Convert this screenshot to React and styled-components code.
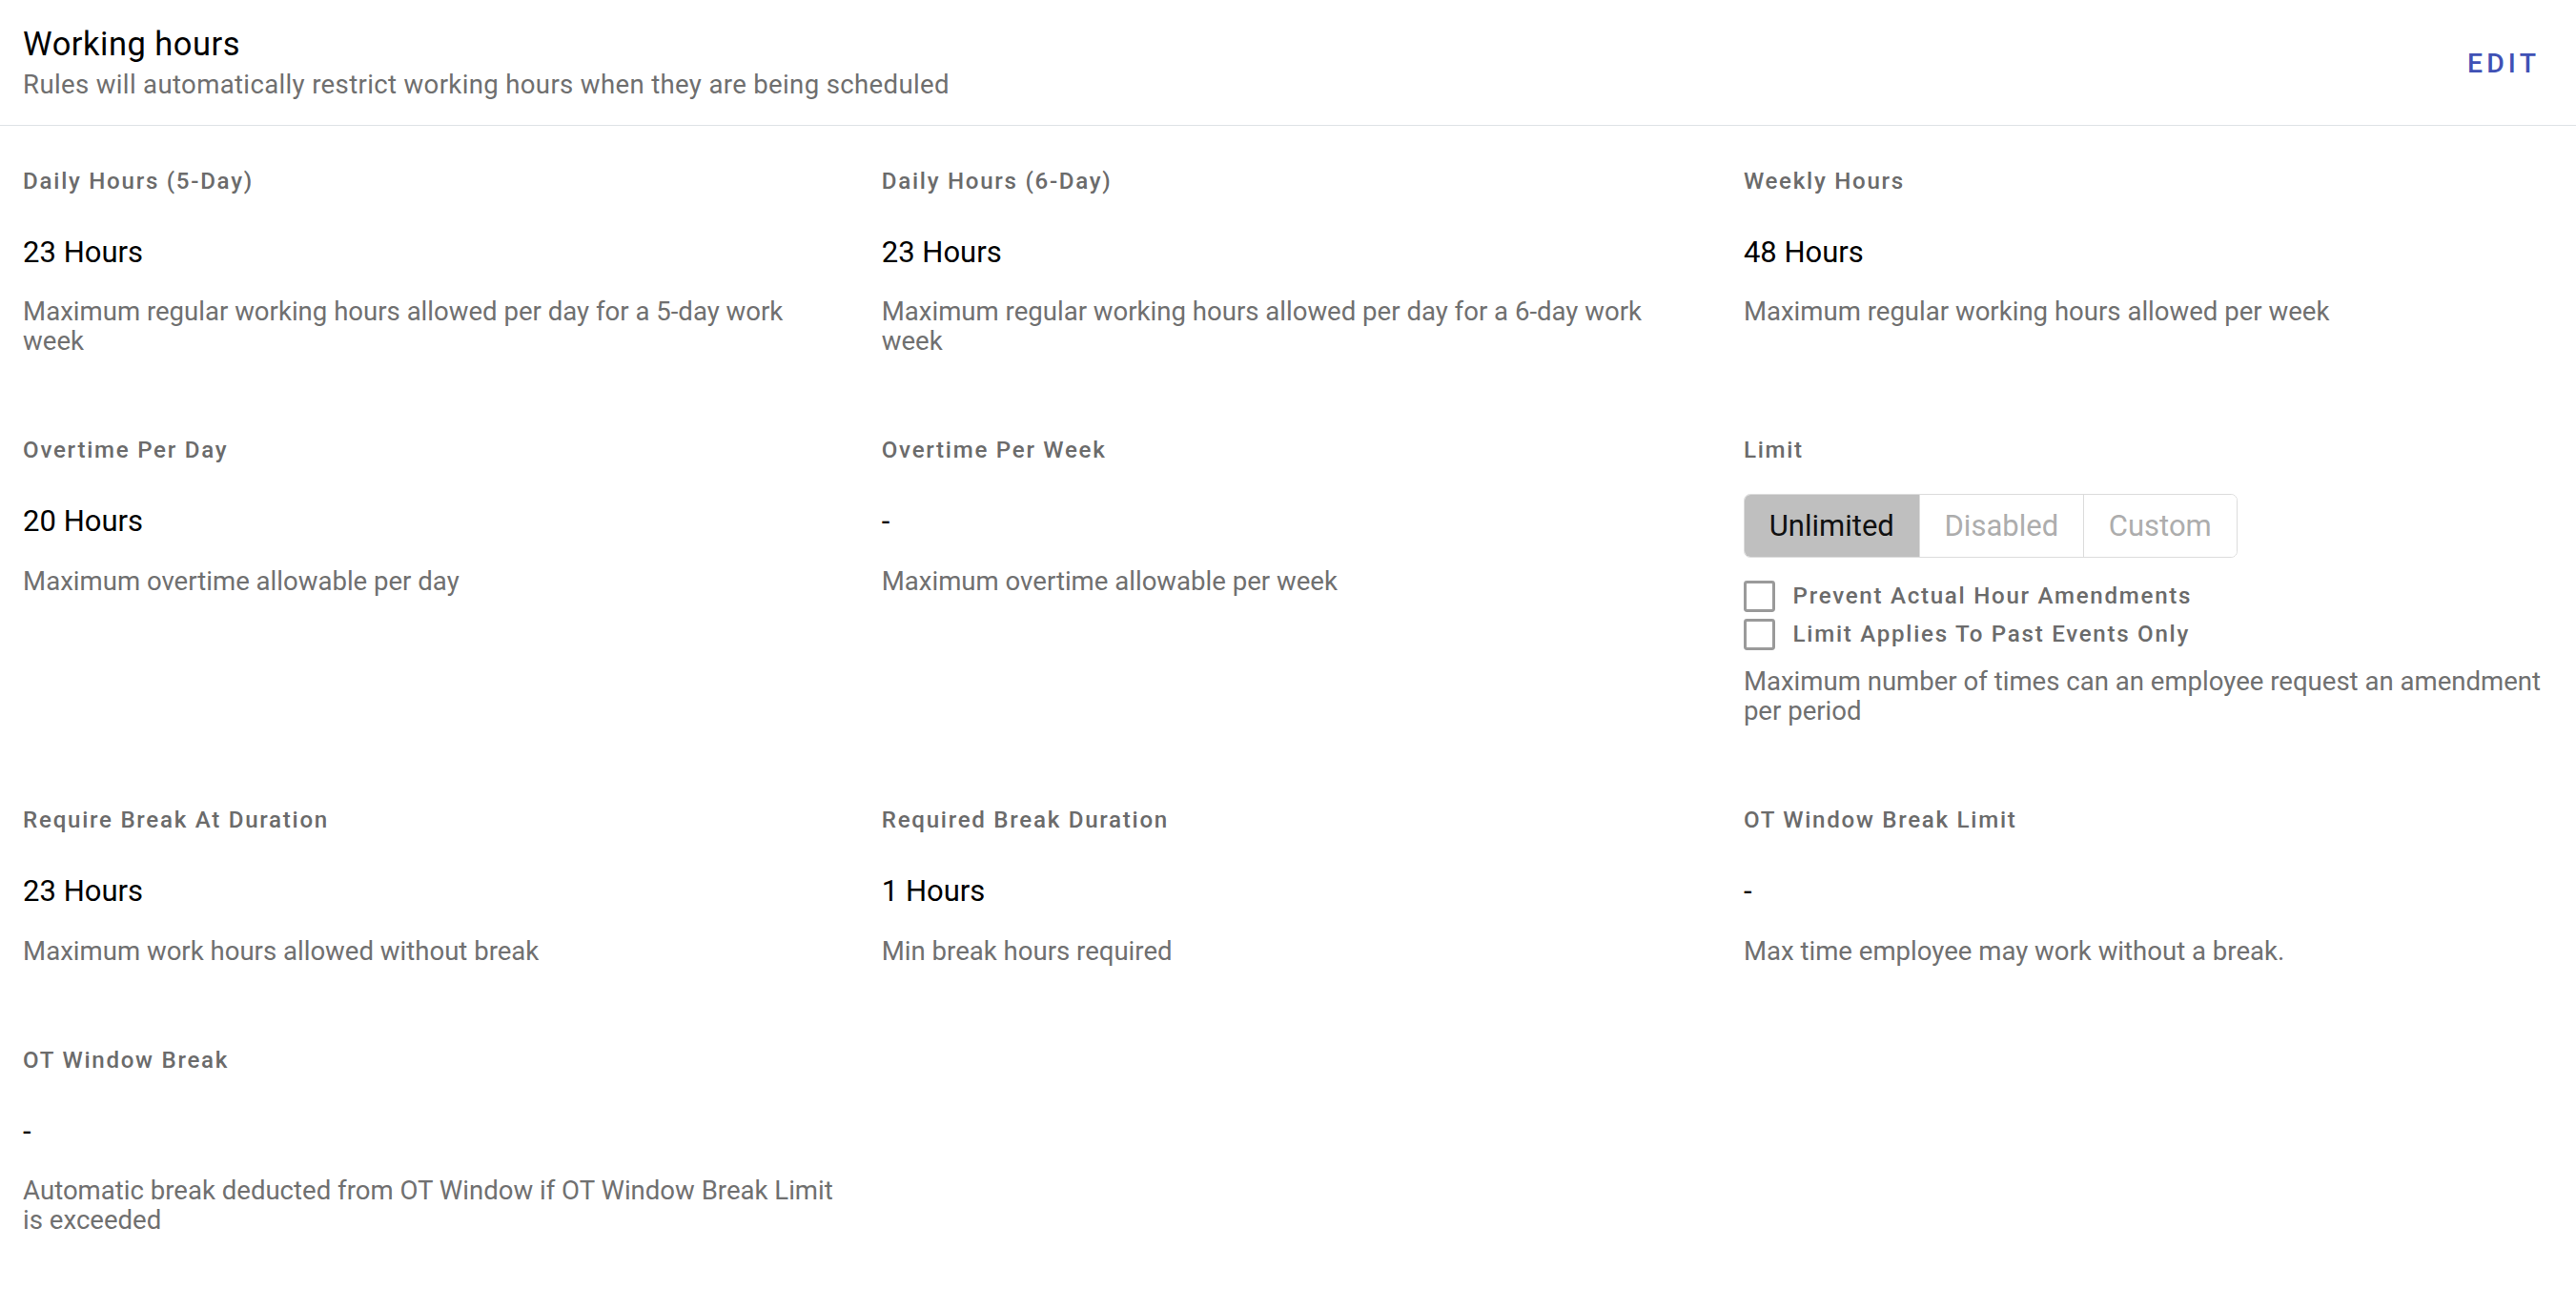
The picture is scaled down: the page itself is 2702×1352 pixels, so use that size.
import React, {useState} from 'react';
import styled, {createGlobalStyle} from "styled-components";

const GlobalStyle = createGlobalStyle`
  html {
    zoom: 1.7232;
  }

  body {
    margin: 0;
    background: #fff;
    font-family: Roboto, "Liberation Sans", Arial, sans-serif;
    color: #000;
  }
`

const Page = styled.div`
  width: 100%;
`

const Header = styled.div`
  display: flex;
  align-items: center;
  justify-content: space-between;
  padding: 15px 22px 14px 14px;
  border-bottom: 1px solid #dfe3e6;
`

const Title = styled.h1`
  margin: 0;
  font-size: 20px;
  line-height: 24px;
  font-weight: 400;
  letter-spacing: 0.3px;
  color: #000;
`

const Subtitle = styled.p`
  margin: 3px 0 0;
  font-size: 16px;
  line-height: 20px;
  letter-spacing: 0.2px;
  color: #6f6f6f;
`

const EditButton = styled.button`
  border: 0;
  background: none;
  padding: 0;
  cursor: pointer;
  font-family: inherit;
  font-size: 16.5px;
  font-weight: 500;
  letter-spacing: 2.4px;
  color: #3f51b5;
`

const Grid = styled.div`
  display: grid;
  grid-template-columns: repeat(3, 1fr);
  row-gap: 50px;
  padding: 26px 0 40px;
`

const Cell = styled.div`
  padding: 0 14px;
  min-width: 0;
  &:nth-child(3n) {
    padding-left: 16px;
  }
`

const Label = styled.div`
  font-size: 14px;
  line-height: 16px;
  font-weight: 500;
  letter-spacing: 1px;
  color: #6b6b6b;
  margin-bottom: ${p => p.$tight ? 18 : 24}px;
`

const Value = styled.div`
  font-size: 18px;
  line-height: 22px;
  color: #000;
  margin-bottom: 16px;
`

const Description = styled.p`
  margin: 0;
  font-size: 16px;
  line-height: 18px;
  color: #707070;
`

const Toggle = styled.div`
  display: inline-flex;
  height: 38px;
  border: 1px solid #dcdcdc;
  border-radius: 4px;
  overflow: hidden;
`

const ToggleButton = styled.button`
  border: 0;
  border-left: ${p => p.$first ? 0 : '1px solid #dcdcdc'};
  background: ${p => p.$active ? '#bfbfbf' : '#fff'};
  color: ${p => p.$active ? '#111' : '#adadad'};
  padding: 0 15px;
  font-family: inherit;
  font-size: 18px;
  cursor: pointer;
`

const Checks = styled.div`
  display: flex;
  flex-direction: column;
  gap: 4px;
  margin: 14px 0 10px;
`

const CheckRow = styled.label`
  display: flex;
  align-items: center;
  gap: 11px;
  font-size: 14px;
  line-height: 19px;
  font-weight: 500;
  letter-spacing: 1px;
  color: #6b6b6b;
  cursor: pointer;
`

const Box = styled.span`
  width: 19px;
  height: 19px;
  box-sizing: border-box;
  border: 2px solid #9a9a9a;
  border-radius: 2px;
  background: ${p => p.$checked ? '#9a9a9a' : '#fff'};
`

const rules = [
  {label: 'Daily Hours (5-Day)', value: '23 Hours', text: 'Maximum regular working hours allowed per day for a 5-day work week'},
  {label: 'Daily Hours (6-Day)', value: '23 Hours', text: 'Maximum regular working hours allowed per day for a 6-day work week'},
  {label: 'Weekly Hours', value: '48 Hours', text: 'Maximum regular working hours allowed per week'},
  {label: 'Overtime Per Day', value: '20 Hours', text: 'Maximum overtime allowable per day'},
  {label: 'Overtime Per Week', value: '-', text: 'Maximum overtime allowable per week'},
  {limit: true},
  {label: 'Require Break At Duration', value: '23 Hours', text: 'Maximum work hours allowed without break'},
  {label: 'Required Break Duration', value: '1 Hours', text: 'Min break hours required'},
  {label: 'OT Window Break Limit', value: '-', text: 'Max time employee may work without a break.'},
  {label: 'OT Window Break', value: '-', text: 'Automatic break deducted from OT Window if OT Window Break Limit is exceeded'},
]

const LimitCell = () => {
  const [mode, setMode] = useState('Unlimited')
  const [checks, setChecks] = useState({prevent: false, past: false})

  return <Cell>
    <Label $tight>Limit</Label>
    <Toggle>
      {['Unlimited', 'Disabled', 'Custom'].map((m, i) =>
        <ToggleButton key={m} $first={i === 0} $active={mode === m} onClick={() => setMode(m)}>{m}</ToggleButton>
      )}
    </Toggle>
    <Checks>
      <CheckRow onClick={() => setChecks({...checks, prevent: !checks.prevent})}>
        <Box $checked={checks.prevent}/>Prevent Actual Hour Amendments
      </CheckRow>
      <CheckRow onClick={() => setChecks({...checks, past: !checks.past})}>
        <Box $checked={checks.past}/>Limit Applies To Past Events Only
      </CheckRow>
    </Checks>
    <Description>Maximum number of times can an employee request an amendment per period</Description>
  </Cell>
}

const App = () => {
  return <Page>
    <GlobalStyle/>
    <Header>
      <div>
        <Title>Working hours</Title>
        <Subtitle>Rules will automatically restrict working hours when they are being scheduled</Subtitle>
      </div>
      <EditButton>EDIT</EditButton>
    </Header>
    <Grid>
      {rules.map((r, i) => r.limit
        ? <LimitCell key={i}/>
        : <Cell key={i}>
          <Label>{r.label}</Label>
          <Value>{r.value}</Value>
          <Description>{r.text}</Description>
        </Cell>
      )}
    </Grid>
  </Page>
}

export default App;
